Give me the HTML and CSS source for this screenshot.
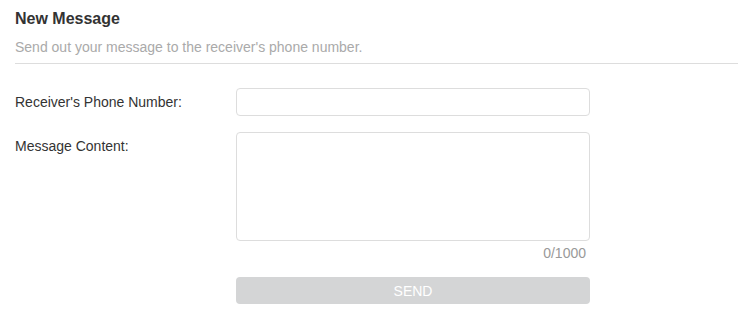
FILE: index.html
```html
<!DOCTYPE html>
<html lang="en">
<head>
    <meta charset="UTF-8">
    <title>New Message</title>
    <link rel="stylesheet" href="styles.css">
</head>
<body>
    <div class="panel">
        <div class="panel-head">
            <h2 class="title">New Message</h2>
            <p class="subtitle">Send out your message to the receiver's phone number.</p>
        </div>
        <form class="form" onsubmit="return false">
            <div class="row">
                <label class="label" for="phone">Receiver's Phone Number:</label>
                <div class="field">
                    <input class="input" id="phone" type="text">
                </div>
            </div>
            <div class="row">
                <label class="label" for="content">Message Content:</label>
                <div class="field">
                    <textarea class="textarea" id="content" maxlength="1000"></textarea>
                    <div class="counter"><span id="count">0</span>/1000</div>
                </div>
            </div>
            <div class="row">
                <div class="label"></div>
                <div class="field">
                    <button class="send" disabled>SEND</button>
                </div>
            </div>
        </form>
    </div>
</body>
</html>
```

FILE: styles.css
```css
body {
    margin: 0;
    font-family: "Liberation Sans", Arial, sans-serif;
    font-size: 14px;
    color: #333;
    background: #fff;
}

.panel {
    padding: 0 13px 0 15px;
}

.panel-head {
    border-bottom: 1px solid #ddd;
    padding-top: 9px;
    padding-bottom: 8px;
}

.title {
    margin: 0;
    font-size: 16px;
    font-weight: bold;
    color: #333;
    line-height: 20px;
}

.subtitle {
    margin: 10px 0 0;
    color: #aaa;
    font-size: 14px;
    line-height: 16px;
}

.form {
    padding-top: 24px;
}

.row {
    display: flex;
    margin-bottom: 16px;
}

.label {
    width: 221px;
    flex-shrink: 0;
    line-height: 28px;
}

.field {
    width: 354px;
}

.input,
.textarea {
    display: block;
    box-sizing: border-box;
    width: 100%;
    border: 1px solid #ddd;
    border-radius: 4px;
    font-family: inherit;
    font-size: 14px;
    padding: 4px 8px;
    outline: none;
}

.input {
    height: 28px;
}

.textarea {
    height: 109px;
    resize: none;
}

.counter {
    text-align: right;
    color: #999;
    line-height: 16px;
    margin-top: 4px;
    padding-right: 4px;
}

.send {
    display: block;
    width: 100%;
    height: 27px;
    border: none;
    border-radius: 4px;
    background: #d4d5d6;
    color: #fff;
    font-family: inherit;
    font-size: 14px;
}
```
